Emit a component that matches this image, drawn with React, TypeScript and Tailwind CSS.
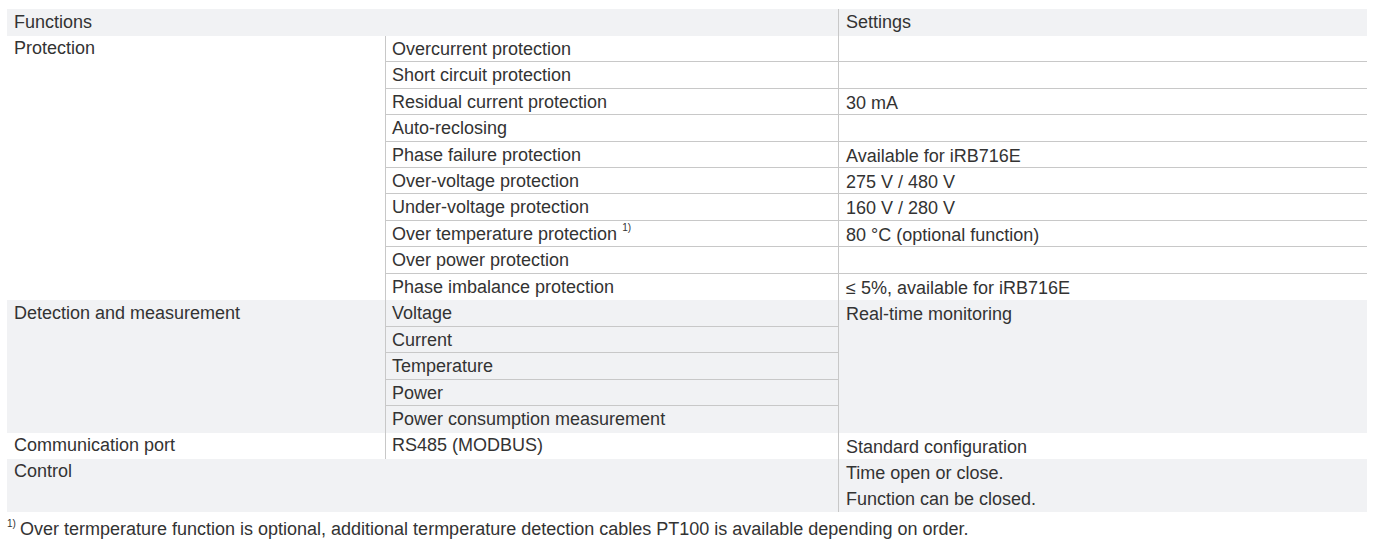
import type { ReactNode } from "react";

const protectionRows: { label: ReactNode; setting: string }[] = [
  { label: "Overcurrent protection", setting: "" },
  { label: "Short circuit protection", setting: "" },
  { label: "Residual current protection", setting: "30 mA" },
  { label: "Auto-reclosing", setting: "" },
  { label: "Phase failure protection", setting: "Available for iRB716E" },
  { label: "Over-voltage protection", setting: "275 V / 480 V" },
  { label: "Under-voltage protection", setting: "160 V / 280 V" },
  {
    label: (
      <>
        Over temperature protection{" "}
        <sup className="relative -top-[2px] text-[10px] align-super leading-none">1)</sup>
      </>
    ),
    setting: "80 °C (optional function)",
  },
  { label: "Over power protection", setting: "" },
  { label: "Phase imbalance protection", setting: "≤ 5%, available for iRB716E" },
];

const detectionRows = ["Voltage", "Current", "Temperature", "Power", "Power consumption measurement"];

export default function App() {
  return (
    <div className="h-[548px] w-[1378px] bg-white pl-[7px] pt-[9px] font-['Liberation_Sans',Arial,sans-serif] text-[18px] leading-6 text-[#333]">
      <div className="w-[1360px]">
        {/* header */}
        <div className="flex h-[27px] bg-[#f1f2f4]">
          <div className="w-[831px] pl-[7px] pt-[1px]">Functions</div>
          <div className="flex-1 border-l border-[#c8c8c8] pl-[7px] pt-[1px]">Settings</div>
        </div>

        {/* protection */}
        <div className="flex">
          <div className="w-[378px] pl-[7px]">Protection</div>
          <div className="flex flex-1 flex-col">
            {protectionRows.map((row, i) => (
              <div
                key={i}
                className={[
                  "flex h-[26.4px]",
                  i < protectionRows.length - 1 ? "border-b border-[#c8c8c8]" : "",
                ].join(" ")}
              >
                <div className="w-[453px] border-l border-[#c8c8c8] pl-[6px] pt-[1px]">{row.label}</div>
                <div className="flex-1 border-l border-[#c8c8c8] pl-[7px] pt-[2px]">{row.setting}</div>
              </div>
            ))}
          </div>
        </div>

        {/* detection and measurement */}
        <div className="flex bg-[#f1f2f4]">
          <div className="w-[378px] pl-[7px] pt-[1px]">Detection and measurement</div>
          <div className="flex w-[453px] flex-col border-l border-[#c8c8c8]">
            {detectionRows.map((label, i) => (
              <div
                key={label}
                className={[
                  "h-[26.6px] pl-[6px] pt-[1px]",
                  i < detectionRows.length - 1 ? "border-b border-[#c8c8c8]" : "",
                ].join(" ")}
              >
                {label}
              </div>
            ))}
          </div>
          <div className="flex-1 border-l border-[#c8c8c8] pl-[7px] pt-[2px]">Real-time monitoring</div>
        </div>

        {/* communication */}
        <div className="flex h-[26px]">
          <div className="w-[378px] pl-[7px]">Communication port</div>
          <div className="w-[453px] border-l border-[#c8c8c8] pl-[6px]">RS485 (MODBUS)</div>
          <div className="flex-1 border-l border-[#c8c8c8] pl-[7px] pt-[2px]">Standard configuration</div>
        </div>

        {/* control */}
        <div className="flex h-[53px] bg-[#f1f2f4]">
          <div className="w-[831px] pl-[7px]">Control</div>
          <div className="flex flex-1 flex-col border-l border-[#c8c8c8] pl-[7px] pt-[2px]">
            <div className="h-[26px]">Time open or close.</div>
            <div className="h-[24px]">Function can be closed.</div>
          </div>
        </div>

        {/* footnote */}
        <div className="mt-[5px] flex items-start">
          <span className="mr-[4px] mt-[2px] text-[10px] leading-none">1)</span>
          <span>
            Over termperature function is optional, additional termperature detection cables PT100 is available
            depending on order.
          </span>
        </div>
      </div>
    </div>
  );
}
